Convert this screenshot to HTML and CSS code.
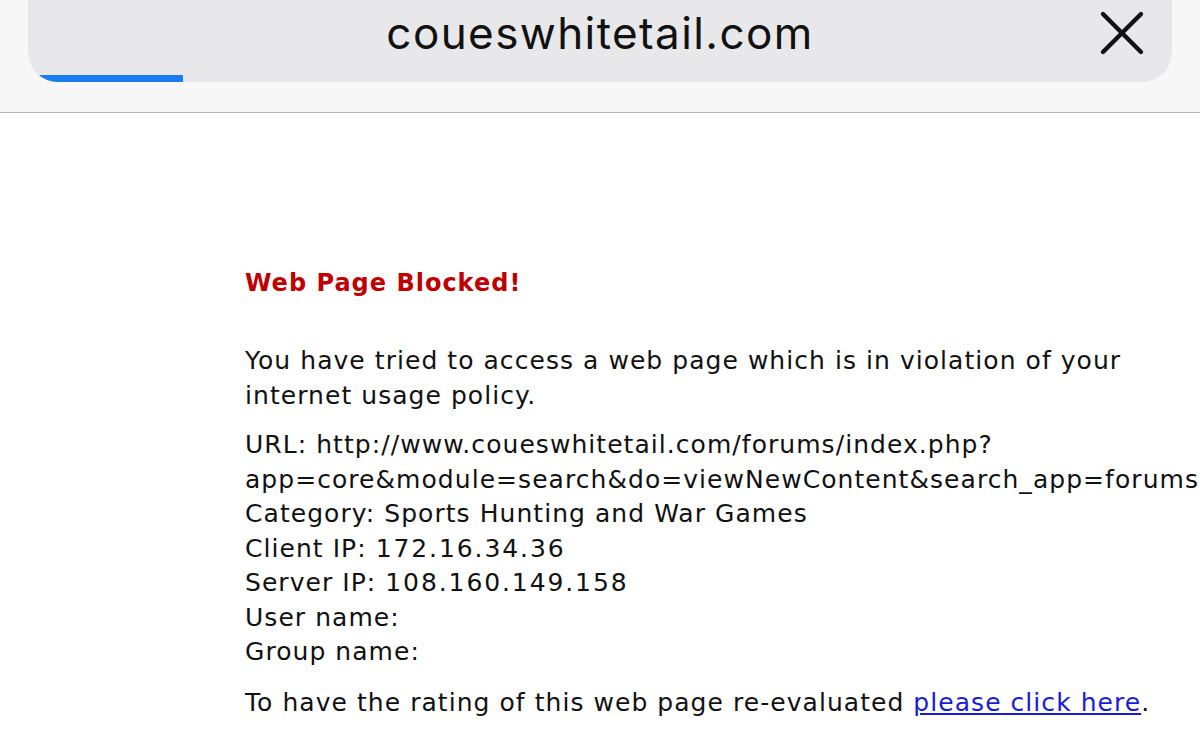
FILE: index.html
```html
<!DOCTYPE html>
<html>
<head>
<meta charset="utf-8">
<link rel="stylesheet" href="styles.css">
</head>
<body>
<header class="toolbar">
  <div class="address">
    <span class="host">coueswhitetail.com</span>
    <svg class="close" viewBox="0 0 46 46" width="46" height="46"><path d="M4 4 L42 42 M42 4 L4 42" stroke="#111" stroke-width="4.4" stroke-linecap="round" fill="none"/></svg>
    <div class="progress"></div>
  </div>
</header>
<main class="page">
  <h1 class="title">Web Page Blocked!</h1>
  <p class="intro">You have tried to access a web page which is in violation of your<br>internet usage policy.</p>
  <p class="details">URL: http://www.coueswhitetail.com/forums/index.php?<br>app=core&amp;module=search&amp;do=viewNewContent&amp;search_app=forums<br>Category: Sports Hunting and War Games<br>Client IP: <span class="num">172.16.34.36</span><br>Server IP: <span class="num">108.160.149.158</span><br>User name:<br>Group name:</p>
  <p class="footer">To have the rating of this web page re-evaluated <a href="#">please click here</a>.</p>
</main>
</body>
</html>
```
FILE: styles.css
```css
html, body {
  margin: 0;
  padding: 0;
  background: #ffffff;
  overflow: hidden;
}
body {
  width: 1200px;
  height: 756px;
}
.toolbar {
  height: 113px;
  background: #f7f7f7;
  border-bottom: 1px solid #b4b4b4;
  box-sizing: border-box;
  padding: 0 28px;
  display: flex;
  align-items: flex-end;
  padding-bottom: 30px;
}
.address {
  position: relative;
  flex: 1;
  height: 120px;
  background: #e8e8ea;
  border-radius: 0 0 30px 30px;
  overflow: hidden;
  display: flex;
  align-items: flex-end;
  justify-content: center;
}
.host {
  font-family: Inter, "Liberation Sans", sans-serif;
  font-size: 44px;
  color: #111;
  letter-spacing: 1.4px;
  line-height: 1;
  margin-bottom: 27px;
}
.close {
  position: absolute;
  right: 27px;
  bottom: 26px;
}
.progress {
  position: absolute;
  left: 0;
  bottom: 0;
  width: 155px;
  height: 7px;
  background: #1a7cf0;
}
.page {
  padding: 0 0 0 245px;
  font-family: "DejaVu Sans", Verdana, sans-serif;
  font-size: 25px;
  letter-spacing: 1.05px;
  color: #111;
  line-height: 34.5px;
  white-space: nowrap;
}
.title {
  margin: 153px 0 0 0;
  font-size: 24px;
  font-weight: bold;
  color: #c00000;
  line-height: 34px;
  letter-spacing: 1px;
}
.intro {
  margin: 44px 0 0 0;
}
.details {
  margin: 15px 0 0 0;
}
.num {
  letter-spacing: 1.9px;
}
.footer {
  margin: 16px 0 0 0;
}
.footer a {
  color: #1a1adc;
  text-decoration: underline;
}
```
